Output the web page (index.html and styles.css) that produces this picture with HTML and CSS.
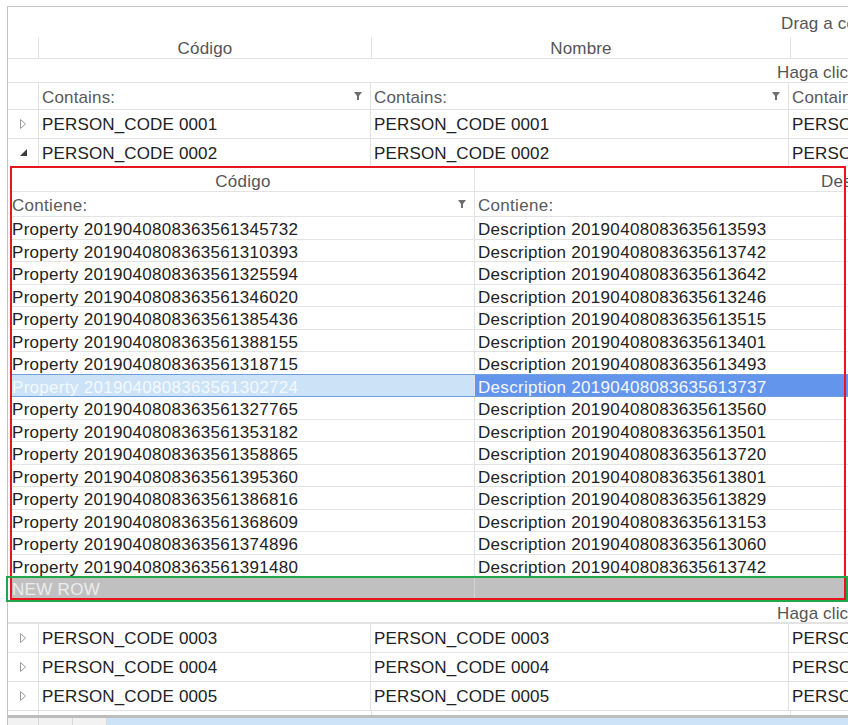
FILE: index.html
```html
<!DOCTYPE html>
<html lang="es">
<head>
<meta charset="utf-8">
<title>Grid</title>
<link rel="stylesheet" href="styles.css">
</head>
<body>
<div class="grid">
  <div class="group-panel">Drag a column header here to group by that column</div>
  <div class="row colhdr">
    <div class="ind"></div>
    <div class="c1 hcell">Código</div>
    <div class="c2 hcell">Nombre</div>
    <div class="c3 hcell"></div>
  </div>
  <div class="row newrow-hint"><span class="hint">Haga clic aquí para agregar una nueva fila</span></div>
  <div class="row filter">
    <div class="ind"></div>
    <div class="c1 fcell"><span>Contains:</span><svg class="funnel" viewBox="0 0 8 8"><polygon points="0,0 8,0 5,4 5,8 3,8 3,4"/></svg></div>
    <div class="c2 fcell"><span>Contains:</span><svg class="funnel" viewBox="0 0 8 8"><polygon points="0,0 8,0 5,4 5,8 3,8 3,4"/></svg></div>
    <div class="c3 fcell"><span>Contains:</span></div>
  </div>
  <div class="row data">
    <div class="ind"><svg class="exp" viewBox="0 0 6 10"><polygon points="0.5,0.5 5.5,5 0.5,9.5" /></svg></div>
    <div class="c1 dcell">PERSON_CODE 0001</div>
    <div class="c2 dcell">PERSON_CODE 0001</div>
    <div class="c3 dcell">PERSON_CODE 0001</div>
  </div>
  <div class="row data open">
    <div class="ind"><svg class="col" viewBox="0 0 7 7"><polygon points="7,0 7,7 0,7" /></svg></div>
    <div class="c1 dcell">PERSON_CODE 0002</div>
    <div class="c2 dcell">PERSON_CODE 0002</div>
    <div class="c3 dcell">PERSON_CODE 0002</div>
  </div>

  <div class="detail">
    <div class="drow dhdr">
      <div class="d1 dh">Código</div>
      <div class="d2 dh">Descripción</div>
    </div>
    <div class="drow dfilter">
      <div class="d1 dfc"><span>Contiene:</span><svg class="funnel" viewBox="0 0 8 8"><polygon points="0,0 8,0 5,4 5,8 3,8 3,4"/></svg></div>
      <div class="d2 dfc"><span>Contiene:</span></div>
    </div>
    <div class="drow ddata"><div class="d1">Property 2019040808363561345732</div><div class="d2">Description 20190408083635613593</div></div>
    <div class="drow ddata"><div class="d1">Property 2019040808363561310393</div><div class="d2">Description 20190408083635613742</div></div>
    <div class="drow ddata"><div class="d1">Property 2019040808363561325594</div><div class="d2">Description 20190408083635613642</div></div>
    <div class="drow ddata"><div class="d1">Property 2019040808363561346020</div><div class="d2">Description 20190408083635613246</div></div>
    <div class="drow ddata"><div class="d1">Property 2019040808363561385436</div><div class="d2">Description 20190408083635613515</div></div>
    <div class="drow ddata"><div class="d1">Property 2019040808363561388155</div><div class="d2">Description 20190408083635613401</div></div>
    <div class="drow ddata"><div class="d1">Property 2019040808363561318715</div><div class="d2">Description 20190408083635613493</div></div>
    <div class="drow ddata sel"><div class="d1">Property 2019040808363561302724</div><div class="d2">Description 20190408083635613737</div></div>
    <div class="drow ddata"><div class="d1">Property 2019040808363561327765</div><div class="d2">Description 20190408083635613560</div></div>
    <div class="drow ddata"><div class="d1">Property 2019040808363561353182</div><div class="d2">Description 20190408083635613501</div></div>
    <div class="drow ddata"><div class="d1">Property 2019040808363561358865</div><div class="d2">Description 20190408083635613720</div></div>
    <div class="drow ddata"><div class="d1">Property 2019040808363561395360</div><div class="d2">Description 20190408083635613801</div></div>
    <div class="drow ddata"><div class="d1">Property 2019040808363561386816</div><div class="d2">Description 20190408083635613829</div></div>
    <div class="drow ddata"><div class="d1">Property 2019040808363561368609</div><div class="d2">Description 20190408083635613153</div></div>
    <div class="drow ddata"><div class="d1">Property 2019040808363561374896</div><div class="d2">Description 20190408083635613060</div></div>
    <div class="drow ddata"><div class="d1">Property 2019040808363561391480</div><div class="d2">Description 20190408083635613742</div></div>
    <div class="drow dnew"><div class="d1">NEW ROW</div><div class="d2"></div></div>
    <div class="mark-red"></div>
    <div class="mark-green"></div>
  </div>

  <div class="row newrow-hint2"><span class="hint">Haga clic aquí para agregar una nueva fila</span></div>
  <div class="row data">
    <div class="ind"><svg class="exp" viewBox="0 0 6 10"><polygon points="0.5,0.5 5.5,5 0.5,9.5" /></svg></div>
    <div class="c1 dcell">PERSON_CODE 0003</div>
    <div class="c2 dcell">PERSON_CODE 0003</div>
    <div class="c3 dcell">PERSON_CODE 0003</div>
  </div>
  <div class="row data">
    <div class="ind"><svg class="exp" viewBox="0 0 6 10"><polygon points="0.5,0.5 5.5,5 0.5,9.5" /></svg></div>
    <div class="c1 dcell">PERSON_CODE 0004</div>
    <div class="c2 dcell">PERSON_CODE 0004</div>
    <div class="c3 dcell">PERSON_CODE 0004</div>
  </div>
  <div class="row data">
    <div class="ind"><svg class="exp" viewBox="0 0 6 10"><polygon points="0.5,0.5 5.5,5 0.5,9.5" /></svg></div>
    <div class="c1 dcell">PERSON_CODE 0005</div>
    <div class="c2 dcell">PERSON_CODE 0005</div>
    <div class="c3 dcell">PERSON_CODE 0005</div>
  </div>
  <div class="row stub">
    <div class="ind"></div>
    <div class="c1"></div>
    <div class="c2"></div>
  </div>
  <div class="hscroll">
    <div class="sb-btn"></div>
    <div class="sb-btn"></div>
    <div class="sb-btn"></div>
    <div class="sb-thumb"></div>
  </div>
</div>
</body>
</html>
```

FILE: styles.css
```css
html, body {
  margin: 0;
  padding: 0;
  background: #ffffff;
}
body {
  width: 848px;
  height: 725px;
  overflow: hidden;
  font-family: "Liberation Sans", Arial, sans-serif;
  font-size: 17px;
  letter-spacing: 0.15px;
  color: #222222;
}
.grid {
  margin: 6px 0 0 7px;
  width: 1300px;
  border-top: 1px solid #c6c6c6;
  border-left: 1px solid #c6c6c6;
}
.row {
  display: flex;
  box-sizing: border-box;
}
.ind {
  width: 30px;
  flex: none;
  border-right: 1px solid #e2e2e2;
  display: flex;
  align-items: center;
  justify-content: center;
}
.c1 { width: 332px; flex: none; border-right: 1px solid #e2e2e2; }
.c2 { width: 418px; flex: none; border-right: 1px solid #e2e2e2; }
.c3 { width: 400px; flex: none; }

.group-panel {
  height: 30px;
  line-height: 33px;
  padding-left: 773px;
  color: #555;
  white-space: nowrap;
}
.colhdr {
  height: 22px;
  border-bottom: 1px solid #e2e2e2;
}
.hcell {
  text-align: center;
  line-height: 23px;
  color: #555;
  white-space: nowrap;
  overflow: hidden;
}
.newrow-hint {
  height: 24px;
  border-bottom: 1px solid #e2e2e2;
  padding-left: 769px;
  padding-top: 5px;
  align-items: center;
  white-space: nowrap;
  color: #555;
}
.newrow-hint2 {
  height: 21px;
  border-bottom: 2px solid #e2e2e2;
  padding-left: 769px;
  padding-top: 2px;
  align-items: center;
  white-space: nowrap;
  color: #555;
}
.filter {
  height: 27px;
  border-bottom: 1px solid #e2e2e2;
}
.fcell {
  display: flex;
  align-items: center;
  justify-content: space-between;
  padding-left: 3px;
  padding-right: 8px;
  box-sizing: border-box;
  color: #5a5a5a;
  white-space: nowrap;
  overflow: hidden;
}
.fcell span { padding-top: 4px; }
.funnel {
  width: 8px;
  height: 8px;
  fill: #6f6f6f;
  flex: none;
}
.data {
  height: 29px;
  border-bottom: 1px solid #e2e2e2;
}
.data.open { height: 27px; border-bottom: none; }
.dcell {
  display: flex;
  align-items: center;
  padding-left: 3px;
  padding-top: 2px;
  box-sizing: border-box;
  white-space: nowrap;
  overflow: hidden;
}
.exp {
  width: 6px;
  height: 10px;
  fill: none;
  stroke: #9a9a9a;
  stroke-width: 1;
}
.col {
  width: 7px;
  height: 7px;
  fill: #3c3c3c;
}

/* detail */
.detail {
  position: relative;
  padding: 2px 0 4px 2px;
  letter-spacing: 0.3px;
}
.drow {
  display: flex;
  box-sizing: border-box;
  border-bottom: 1px solid #e3e3e3;
  white-space: nowrap;
}
.drow .d1 {
  width: 465px;
  flex: none;
  box-sizing: border-box;
  border-right: 1px solid #e3e3e3;
  padding-left: 2px;
  overflow: hidden;
}
.drow .d2 {
  width: 800px;
  flex: none;
  box-sizing: border-box;
  padding-left: 3px;
  overflow: hidden;
}
.dhdr {
  height: 24px;
  color: #555;
}
.dhdr .d1 { text-align: center; line-height: 27px; }
.dhdr .d2 { padding-left: 346px; line-height: 27px; }
.dfilter {
  height: 25px;
  color: #5a5a5a;
}
.dfc {
  display: flex;
  align-items: center;
  justify-content: space-between;
}
.dfc span { padding-top: 4px; }
.dfilter .d1 { padding-right: 8px; }
.ddata {
  height: 22.5px;
  line-height: 22px;
  color: #222222;
}
.ddata .d1, .ddata .d2 { padding-top: 2px; }
.ddata.sel {
  border-top: 1px solid #6f9fdc;
  border-bottom: 1px solid #6f9fdc;
  margin-top: -1px;
  height: 23.5px;
}
.ddata.sel .d1 {
  background: #cce3f7;
  color: #f4f9ff;
}
.ddata.sel .d2 {
  background: #6495ed;
  color: #f4f8ff;
}
.dnew {
  height: 22px;
  line-height: 25px;
  background: #c0c0c0;
  border-bottom: none;
  color: #ececec;
}
.dnew .d1 { border-right: 1px solid #d6d6d6; }
.mark-red {
  position: absolute;
  left: 2px;
  top: 0;
  width: 836px;
  height: 434px;
  box-sizing: border-box;
  border: 2px solid #e8141e;
}
.mark-green {
  position: absolute;
  left: -2px;
  top: 410px;
  width: 842px;
  height: 26px;
  box-sizing: border-box;
  border: 2px solid #1fa84a;
}
.stub {
  height: 4px;
}
.stub .ind, .stub .c1, .stub .c2 { height: 4px; }
.hscroll {
  display: flex;
  height: 10px;
  border-top: 3px solid #bdbdbd;
}
.sb-btn {
  width: 33px;
  flex: none;
  border-right: 1px solid #d8d8d8;
  background: #f2f2f2;
}
.sb-btn:first-child { width: 30px; }
.sb-thumb {
  flex: 1;
  background: #cde3f7;
}
```
